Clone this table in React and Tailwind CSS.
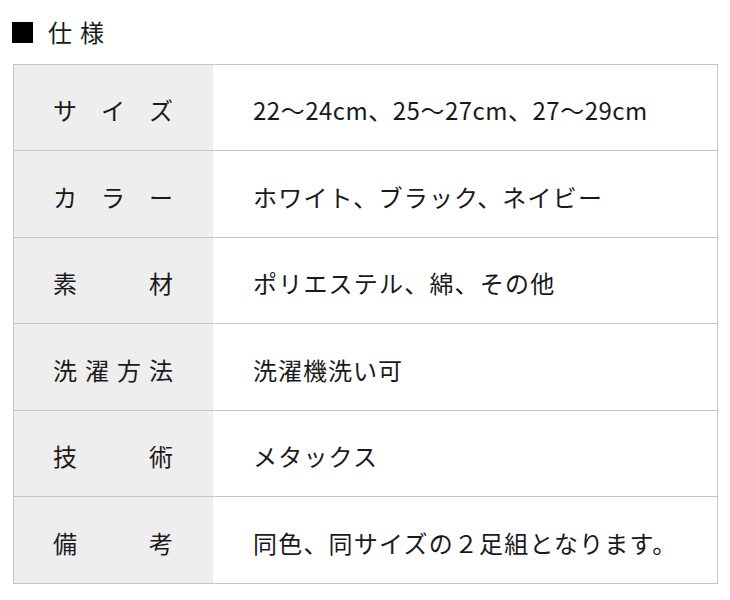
const specs = [
  { label: ['サ', 'イ', 'ズ'], value: '22〜24cm、25〜27cm、27〜29cm', h: 'h-[86px]', track: 'tracking-[0.5px]' },
  { label: ['カ', 'ラ', 'ー'], value: 'ホワイト、ブラック、ネイビー', h: 'h-[87px]', track: 'tracking-[1.2px]' },
  { label: ['素', '材'], value: 'ポリエステル、綿、その他', h: 'h-[86px]', track: 'tracking-[1.2px]' },
  { label: ['洗', '濯', '方', '法'], value: '洗濯機洗い可', h: 'h-[87px]', track: 'tracking-[1px]' },
  { label: ['技', '術'], value: 'メタックス', h: 'h-[86px]', track: 'tracking-[1.2px]' },
  { label: ['備', '考'], value: '同色、同サイズの２足組となります。', h: 'h-[86px]', track: 'tracking-[1.2px]' },
];

const SpecRow = ({ label, value, h, track, last }) => (
  <div className={`flex ${h} ${last ? '' : 'border-b border-[#c6c6c6]'}`}>
    {/* label cell */}
    <div className="w-[199px] shrink-0 bg-[#eeeeee] flex items-center pl-[39px] pt-[5px]">
      <div className="w-[120px] flex justify-between">
        {label.map((ch, i) => (
          <span key={i}>{ch}</span>
        ))}
      </div>
    </div>
    {/* value cell */}
    <div className={`flex-1 flex items-center pl-[40px] pt-[5px] ${track}`}>{value}</div>
  </div>
);

const App = () => {
  return (
    <div
      className="w-[730px] h-[600px] bg-white text-[#1a1a1a] pt-[20px]"
      style={{ fontFamily: '"Noto Sans CJK JP", "Noto Sans", sans-serif' }}
    >
      {/* Title */}
      <div className="flex items-center pl-[12px] h-[24px]">
        <div className="w-[21px] h-[21px] bg-black" />
        <span className="ml-[15px] text-[24px] leading-none tracking-[8px]">仕様</span>
      </div>

      {/* Spec table */}
      <div className="ml-[13px] mt-[20px] w-[705px] border border-[#c6c6c6] text-[24px] leading-none">
        {specs.map((s, i) => (
          <SpecRow key={i} {...s} last={i === specs.length - 1} />
        ))}
      </div>
    </div>
  );
};

export default App;
